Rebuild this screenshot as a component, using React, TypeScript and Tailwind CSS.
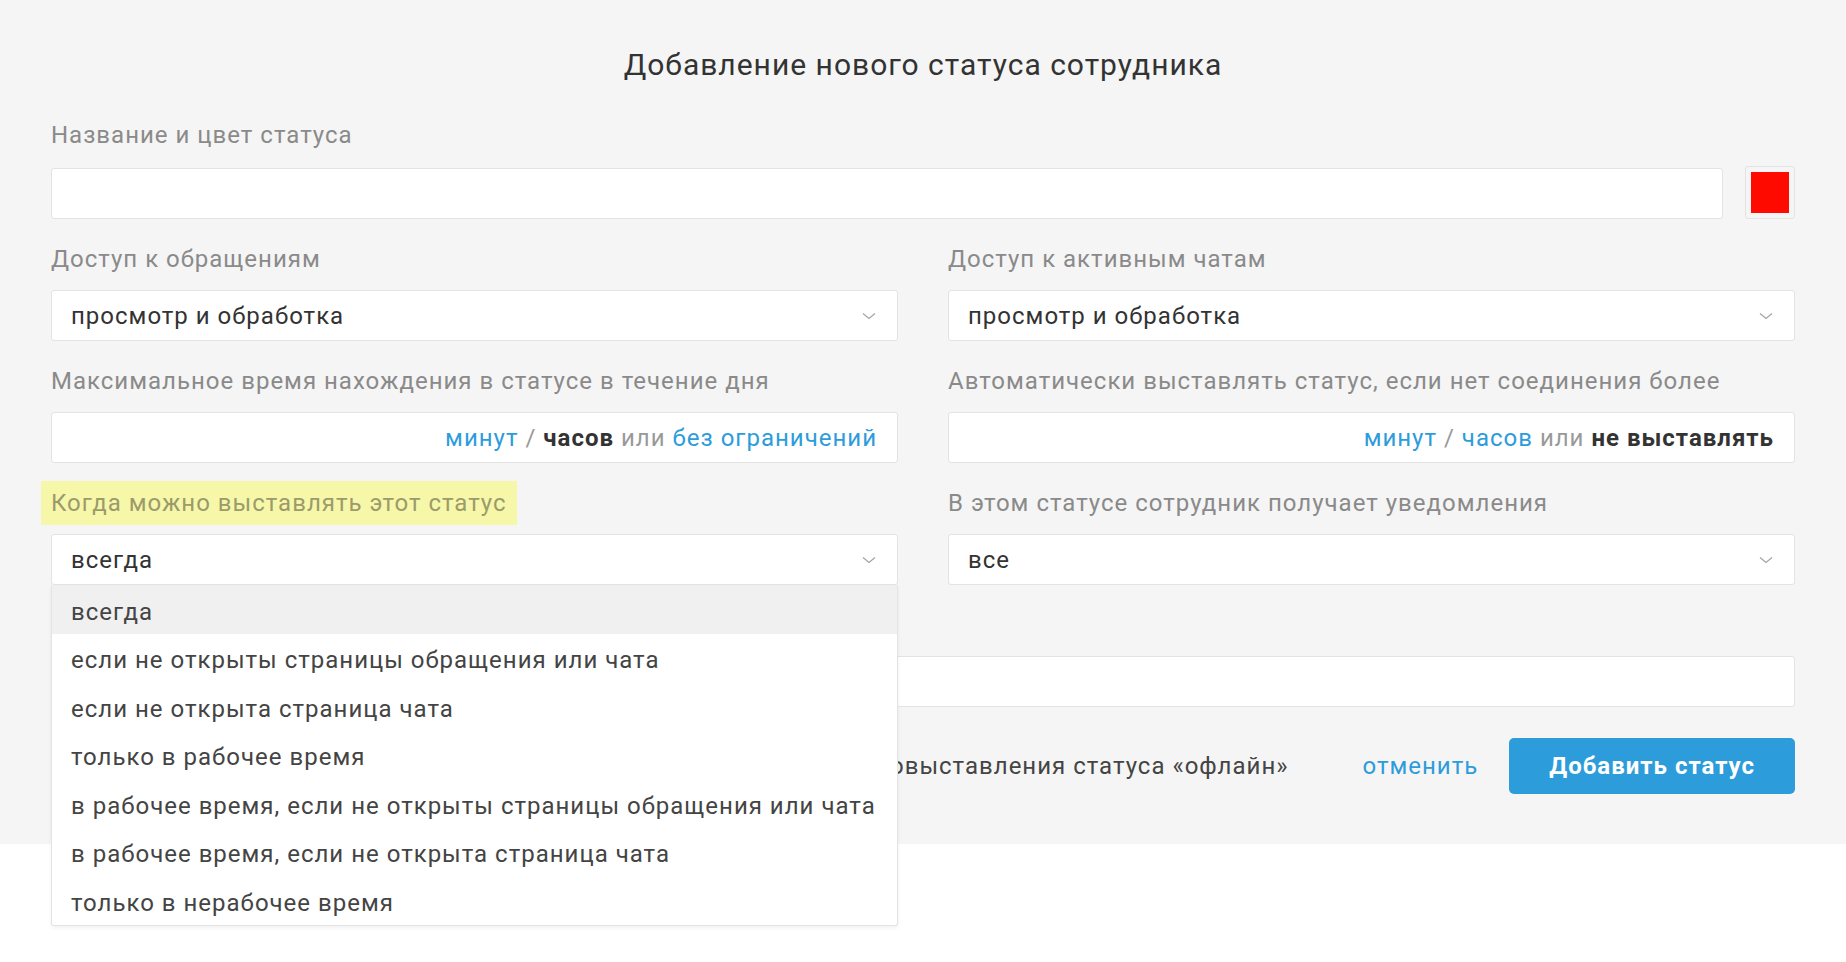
import React from "react";

const whenOptions = [
  "всегда",
  "если не открыты страницы обращения или чата",
  "если не открыта страница чата",
  "только в рабочее время",
  "в рабочее время, если не открыты страницы обращения или чата",
  "в рабочее время, если не открыта страница чата",
  "только в нерабочее время"
];

function Chevron() {
  return (
    <svg width="14" height="8" viewBox="0 0 14 8" className="shrink-0">
      <path d="M1 1.5L7 6.5L13 1.5" fill="none" stroke="#a3a3a3" strokeWidth="1.2" />
    </svg>
  );
}

function Label({ children }: { children?: React.ReactNode }) {
  return (
    <div className="h-[30px] whitespace-nowrap text-[24px] leading-[30px] text-[#8a8a8a]">
      {children}
    </div>
  );
}

function Select({ value }: { value: string }) {
  return (
    <div className="flex h-[51px] items-center justify-between rounded-[3px] border border-[#e3e3e3] bg-white pl-[19px] pr-[21px] text-[24px] text-[#333]">
      <span>{value}</span>
      <Chevron />
    </div>
  );
}

function TimeInput({ children }: { children: React.ReactNode }) {
  return (
    <div className="flex h-[51px] items-center justify-end rounded-[3px] border border-[#e3e3e3] bg-white pr-[20px] text-[24px] text-[#999]">
      <span className="whitespace-nowrap">{children}</span>
    </div>
  );
}

export default function App(): React.JSX.Element {
  return (
    <div className="min-h-screen bg-white font-['Roboto',sans-serif] tracking-[1px]">
      <div className="bg-[#f5f5f5] px-[51px] pb-[50px] pt-[45px]">
        <h1 className="text-center text-[30px] leading-[40px] text-[#333]">
          Добавление нового статуса сотрудника
        </h1>

        <div className="mt-[35px] grid grid-cols-2 gap-x-[50px] gap-y-[25px]">
          <div className="col-span-2">
            <Label>Название и цвет статуса</Label>
            <div className="mt-[16px] flex items-end gap-[22px]">
              <div className="h-[51px] flex-1 rounded-[3px] border border-[#e3e3e3] bg-white" />
              <div className="h-[53px] w-[50px] rounded-[3px] border border-[#e3e3e3] bg-[#f5f5f5] p-[5px]">
                <div className="h-full w-full bg-[#ff0a00]" />
              </div>
            </div>
          </div>

          <div>
            <Label>Доступ к обращениям</Label>
            <div className="mt-[16px]">
              <Select value="просмотр и обработка" />
            </div>
          </div>
          <div>
            <Label>Доступ к активным чатам</Label>
            <div className="mt-[16px]">
              <Select value="просмотр и обработка" />
            </div>
          </div>

          <div>
            <Label>Максимальное время нахождения в статусе в течение дня</Label>
            <div className="mt-[16px]">
              <TimeInput>
                <span className="text-[#2d9cdb]">минут</span> /{" "}
                <span className="font-bold text-[#333]">часов</span> или{" "}
                <span className="text-[#2d9cdb]">без ограничений</span>
              </TimeInput>
            </div>
          </div>
          <div>
            <Label>Автоматически выставлять статус, если нет соединения более</Label>
            <div className="mt-[16px]">
              <TimeInput>
                <span className="text-[#2d9cdb]">минут</span> /{" "}
                <span className="text-[#2d9cdb]">часов</span> или{" "}
                <span className="font-bold text-[#333]">не выставлять</span>
              </TimeInput>
            </div>
          </div>

          <div>
            <Label>
              <span className="-my-[7px] -ml-[10px] inline-block bg-[#f7f7a9] px-[10px] py-[7px] text-[#9b9b6b]">
                Когда можно выставлять этот статус
              </span>
            </Label>
            <div className="relative mt-[16px]">
              <Select value="всегда" />
              <ul className="absolute left-0 right-0 top-full z-10 rounded-b-[3px] border border-t-0 border-[#e3e3e3] bg-white shadow-[0_2px_4px_rgba(0,0,0,0.06)]">
                {whenOptions.map((opt, i) => (
                  <li
                    key={opt}
                    className={
                      i === 0
                        ? "flex h-[48.5px] items-center whitespace-nowrap bg-[#f0f0f0] pl-[19px] pt-[5px] text-[24px] text-[#444]"
                        : "flex h-[48.5px] items-center whitespace-nowrap pl-[19px] pt-[5px] text-[24px] text-[#444]"
                    }
                  >
                    {opt}
                  </li>
                ))}
              </ul>
            </div>
          </div>
          <div>
            <Label>В этом статусе сотрудник получает уведомления</Label>
            <div className="mt-[16px]">
              <Select value="все" />
            </div>
          </div>

          <div className="col-span-2">
            <Label />
            <div className="mt-[16px] h-[51px] rounded-[3px] border border-[#e3e3e3] bg-white" />
          </div>
        </div>

        <div className="mt-[31px] flex items-center">
          <div className="min-w-0 flex-1 pr-[74px] text-right text-[24px] text-[#444]">
            <span className="whitespace-nowrap">автовыставления статуса «офлайн»</span>
          </div>
          <div className="flex items-center gap-[31px]">
            <a className="text-[24px] text-[#2d9cdb]">отменить</a>
            <button className="h-[56px] rounded-[5px] bg-[#2d9cdb] px-[40px] text-[24px] font-bold text-white">
              Добавить статус
            </button>
          </div>
        </div>
      </div>
    </div>
  );
}
